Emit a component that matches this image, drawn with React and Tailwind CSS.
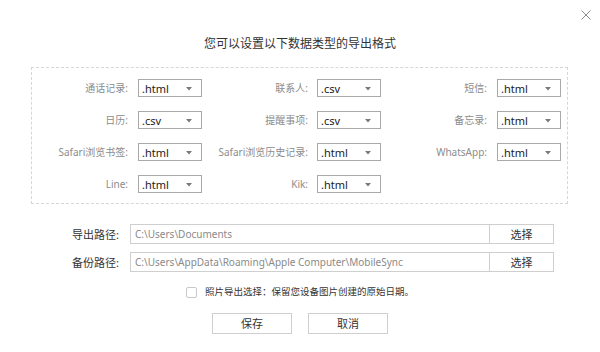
import React from "react";

const FONT = { fontFamily: '"Noto Sans", "Noto Sans CJK SC", sans-serif' };

function Select({ value }) {
  return (
    <div className="relative h-[18px] w-[64px] border border-[#a9a9a9] bg-white flex items-center pl-[3px] text-[11px] leading-none text-[#222]">
      {value}
      <svg className="absolute right-[9px] top-[7px]" width="6" height="4" viewBox="0 0 6 4">
        <path d="M0 0 H6 L3 3.5 Z" fill="#7a7a7a" />
      </svg>
    </div>
  );
}

function Label({ children, pr }) {
  return (
    <div className={`flex items-center justify-end text-[10px] leading-none text-[#8c8c8c] ${pr}`}>
      {children}
    </div>
  );
}

const rows = [
  [["通话记录:", ".html"], ["联系人:", ".csv"], ["短信:", ".html"]],
  [["日历:", ".csv"], ["提醒事项:", ".csv"], ["备忘录:", ".html"]],
  [["Safari浏览书签:", ".html"], ["Safari浏览历史记录:", ".html"], ["WhatsApp:", ".html"]],
  [["Line:", ".html"], ["Kik:", ".html"], null],
];

export default function App() {
  return (
    <div className="relative w-[600px] h-[352px] bg-white overflow-hidden" style={FONT}>
      <svg className="absolute left-[581px] top-[10px]" width="10" height="10" viewBox="0 0 10 10">
        <path d="M0.5 0.5 L9.5 9.5 M9.5 0.5 L0.5 9.5" stroke="#8a8a8a" strokeWidth="1" />
      </svg>

      <div className="pt-[36px] text-center text-[12px] leading-[16px] text-[#333]">
        您可以设置以下数据类型的导出格式
      </div>

      <div className="mt-[15px] ml-[31px] w-[537px] border border-dashed border-[#d6d6d6] pt-[11px] pb-[10px]">
        <div className="grid grid-cols-[106px_64px_115px_64px_116px_64px] gap-y-[14px]">
          {rows.map((r, i) => (
            <React.Fragment key={i}>
              {r.map((c, j) => {
                const pr = j === 0 ? "pr-[10px]" : j === 1 ? "pr-[9px]" : "pr-[10px]";
                if (!c) return <React.Fragment key={j}><div /><div /></React.Fragment>;
                return (
                  <React.Fragment key={j}>
                    <Label pr={pr}>{c[0]}</Label>
                    <Select value={c[1]} />
                  </React.Fragment>
                );
              })}
            </React.Fragment>
          ))}
        </div>
      </div>

      <div className="mt-[20px] flex flex-col gap-[8px]">
        {[
          ["导出路径:", "C:\\Users\\Documents"],
          ["备份路径:", "C:\\Users\\AppData\\Roaming\\Apple Computer\\MobileSync"],
        ].map(([l, v]) => (
          <div key={l} className="flex items-center h-[20px] pl-[72px]">
            <div className="w-[58px] text-[11px] leading-none text-[#333]">{l}</div>
            <div className="flex h-[20px] w-[424px] border border-[#cfcfcf]">
              <div className="flex-1 flex items-center pl-[4px] text-[10px] leading-none text-[#8a8a8a] border-r border-[#cfcfcf]">
                {v}
              </div>
              <div className="w-[63px] flex items-center justify-center text-[11px] leading-none text-[#333]">
                选择
              </div>
            </div>
          </div>
        ))}
      </div>

      <div className="mt-[14px] flex items-center justify-center h-[12px]">
        <div className="w-[11px] h-[11px] border border-[#c8c8c8] rounded-[2px] bg-white mr-[8px]" />
        <div className="text-[9.5px] leading-none text-[#333]">照片导出选择：保留您设备图片创建的原始日期。</div>
      </div>

      <div className="mt-[15px] flex justify-center gap-[16px]">
        <div className="w-[80px] h-[21px] border border-[#cfcfcf] flex items-center justify-center text-[11px] leading-none text-[#333]">保存</div>
        <div className="w-[80px] h-[21px] border border-[#cfcfcf] flex items-center justify-center text-[11px] leading-none text-[#333]">取消</div>
      </div>
    </div>
  );
}
